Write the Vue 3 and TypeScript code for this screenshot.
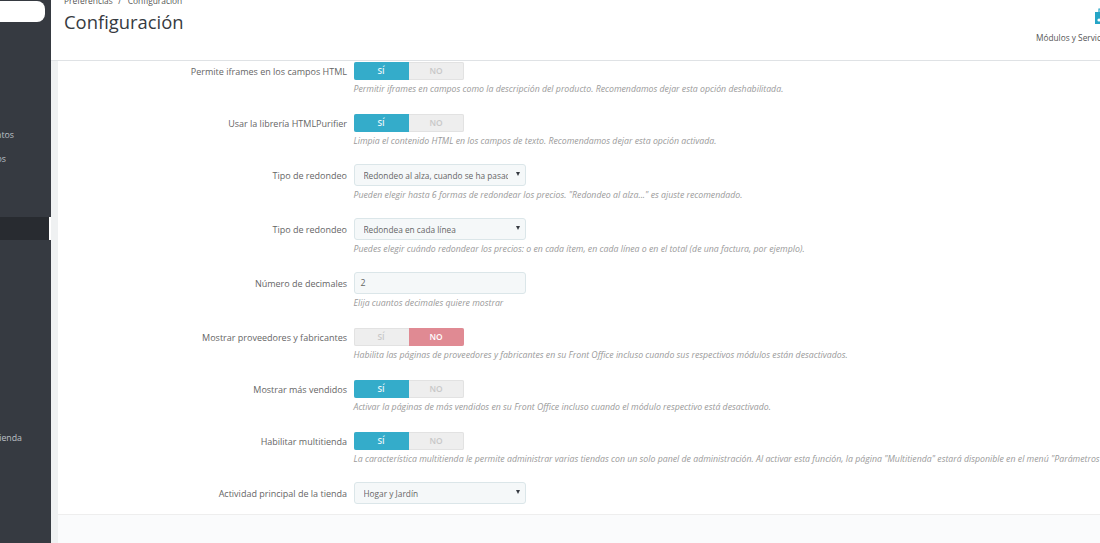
<script setup lang="ts">
type Row =
  | { label: string; kind: 'switch'; on: boolean; help: string }
  | { label: string; kind: 'select'; value: string; help?: string }
  | { label: string; kind: 'input'; value: string; help: string }

const rows: Row[] = [
  { label: 'Permite iframes en los campos HTML', kind: 'switch', on: true, help: 'Permitir iframes en campos como la descripción del producto. Recomendamos dejar esta opción deshabilitada.' },
  { label: 'Usar la librería HTMLPurifier', kind: 'switch', on: true, help: 'Limpia el contenido HTML en los campos de texto. Recomendamos dejar esta opción activada.' },
  { label: 'Tipo de redondeo', kind: 'select', value: 'Redondeo al alza, cuando se ha pasado', help: 'Pueden elegir hasta 6 formas de redondear los precios. "Redondeo al alza..." es ajuste recomendado.' },
  { label: 'Tipo de redondeo', kind: 'select', value: 'Redondea en cada línea', help: 'Puedes elegir cuándo redondear los precios: o en cada ítem, en cada línea o en el total (de una factura, por ejemplo).' },
  { label: 'Número de decimales', kind: 'input', value: '2', help: 'Elija cuantos decimales quiere mostrar' },
  { label: 'Mostrar proveedores y fabricantes', kind: 'switch', on: false, help: 'Habilita las páginas de proveedores y fabricantes en su Front Office incluso cuando sus respectivos módulos están desactivados.' },
  { label: 'Mostrar más vendidos', kind: 'switch', on: true, help: 'Activar la páginas de más vendidos en su Front Office incluso cuando el módulo respectivo está desactivado.' },
  { label: 'Habilitar multitienda', kind: 'switch', on: true, help: 'La característica multitienda le permite administrar varias tiendas con un solo panel de administración. Al activar esta función, la página "Multitienda" estará disponible en el menú "Parámetros avanzados".' },
  { label: 'Actividad principal de la tienda', kind: 'select', value: 'Hogar y Jardín' },
]
</script>

<template>
  <div class="page">
    <aside class="sidebar">
      <div class="search"></div>
      <div class="nav">
        <div class="item i1">Descuentos</div>
        <div class="item i2">Pedidos</div>
        <div class="item active"></div>
        <div class="item i3">Multitienda</div>
      </div>
    </aside>
    <div class="main">
      <header class="head">
        <div class="titles">
          <div class="crumb"><span>Preferencias</span><span class="sep">/</span><span>Configuración</span></div>
          <h1>Configuración</h1>
        </div>
        <div class="tool">
          <svg class="tool-icon" viewBox="0 0 16 18" width="16" height="18">
            <path d="M2 5h12v12H2z" fill="#25a5c6" />
            <path d="M6 5V2h4v3" fill="none" stroke="#25a5c6" stroke-width="1.2" />
            <circle cx="6" cy="13" r="1.6" fill="#fff" />
          </svg>
          <span class="tool-label">Módulos y Servicios</span>
        </div>
      </header>
      <div class="body">
        <div class="panel">
          <div class="form">
            <div v-for="(row, i) in rows" :key="i" class="row" :class="row.kind === 'switch' ? 'row-switch' : 'row-box'">
              <label class="label">{{ row.label }}</label>
              <div class="field">
                <div v-if="row.kind === 'switch'" class="switch">
                  <span class="opt" :class="{ yes: row.on }">SÍ</span>
                  <span class="opt" :class="{ no: !row.on }">NO</span>
                </div>
                <div v-else-if="row.kind === 'select'" class="select">
                  <span class="select-text">{{ row.value }}</span>
                  <span class="caret"></span>
                </div>
                <div v-else class="select input">{{ row.value }}</div>
                <p v-if="row.help" class="help">{{ row.help }}</p>
              </div>
            </div>
          </div>
          <div class="panel-foot"></div>
        </div>
      </div>
    </div>
  </div>
</template>

<style>
html, body { margin: 0; overflow: hidden; background: #fff; }
</style>

<style scoped>
.page {
  display: flex;
  width: 1100px;
  height: 543px;
  overflow: hidden;
  font-family: "Open Sans", "Liberation Sans", sans-serif;
  color: #666;
}
.sidebar {
  width: 50.5px;
  flex: none;
  background: #363a41;
  display: flex;
  flex-direction: column;
  overflow: hidden;
}
.search {
  width: 45px;
  height: 21px;
  margin-top: 1px;
  background: #fff;
  border-radius: 0 8px 8px 0;
}
.nav { display: flex; flex-direction: column; margin-top: 102px; }
.item {
  height: 23px;
  line-height: 23px;
  font-size: 8.8px;
  color: #bcc0c6;
  white-space: nowrap;
  display: flex;
  justify-content: flex-end;
  box-sizing: border-box;
}
.i1 { padding-right: 36.5px; }
.i2 { padding-right: 44.5px; margin-top: 1px; }
.active {
  margin-top: 46px;
  background: #282b30;
  border-right: 2px solid #fff;
}
.i3 { padding-right: 28.5px; margin-top: 187px; }
.main { flex: 1; min-width: 0; display: flex; flex-direction: column; }
.head {
  height: 60px;
  flex: none;
  border-bottom: 1px solid #dfe2e5;
  background: #fff;
  display: flex;
  justify-content: space-between;
  padding-left: 13.5px;
  overflow: hidden;
}
.crumb { font-size: 8.4px; line-height: 10px; margin-top: -4px; color: #555; }
.sep { margin: 0 6.5px 0 5.5px; }
h1 {
  margin: 3px 0 0;
  font-size: 18.4px;
  line-height: 26px;
  font-weight: 400;
  color: #363a41;
}
.tool {
  width: 64px;
  flex: none;
  position: relative;
}
.tool-icon { position: absolute; left: 57px; top: 7px; }
.tool-label {
  position: absolute;
  left: 0;
  top: 31px;
  font-size: 8.3px;
  line-height: 14px;
  white-space: nowrap;
  color: #555;
}
.body { flex: 1; background: #eff1f2; padding-left: 7px; overflow: hidden; }
.panel { background: #fff; height: 100%; display: flex; flex-direction: column; }
.form { margin-top: -0.7px; height: 453.7px; flex: none; }
.row { display: flex; }
.row-switch { height: 52px; padding-top: 2px; box-sizing: border-box; }
.row-box { height: 54px; box-sizing: border-box; }
.label {
  width: 289.5px;
  flex: none;
  text-align: right;
  font-size: 9px;
  color: #666;
  white-space: nowrap;
}
.row-switch .label { line-height: 19px; }
.row-box .label { line-height: 23px; }
.field { margin-left: 6.5px; flex: none; }
.switch {
  width: 110px;
  height: 18px;
  display: flex;
  border-radius: 2px;
  overflow: hidden;
  background: #eeeeee;
  box-shadow: inset 0 0 0 1px #e2e2e2;
  font-size: 8.4px;
  font-weight: 600;
}
.opt {
  width: 55px;
  text-align: center;
  line-height: 18px;
  color: #c8c8c8;
}
.opt.yes { background: #34acca; color: #e8f6fa; }
.opt.no { background: #e08a93; color: #fff; }
.select {
  width: 172.5px;
  height: 22px;
  box-sizing: border-box;
  display: flex;
  align-items: center;
  padding-left: 9px;
  background: #f5f8f9;
  border: 1px solid #dbe6e9;
  border-radius: 3px;
  font-size: 8.3px;
  color: #666;
  position: relative;
}
.select-text { width: 144px; overflow: hidden; white-space: nowrap; }
.caret {
  position: absolute;
  right: 5px;
  top: 7px;
  border-left: 2.5px solid transparent;
  border-right: 2.5px solid transparent;
  border-top: 4px solid #363a41;
}
.input { padding-left: 6px; font-size: 8.8px; }
.help {
  margin: 3.5px 0 0;
  font-size: 8.76px;
  line-height: 11px;
  font-style: italic;
  color: #9a9a9a;
  white-space: nowrap;
}
.panel-foot {
  flex: 1;
  background: #fafbfc;
  border-top: 1px solid #eeeeee;
}
</style>
